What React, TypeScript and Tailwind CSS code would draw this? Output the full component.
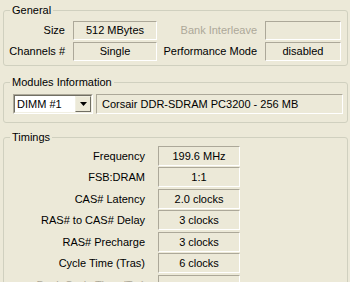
import React from "react";

const font = { fontFamily: '"Liberation Sans", Arial, sans-serif' };

function Box({ children, className = "" }: { children?: React.ReactNode; className?: string }) {
  return (
    <div
      className={
        "flex items-center justify-center border border-t-[#aca899] border-l-[#aca899] border-b-white border-r-white bg-[#ece9d8] text-black whitespace-nowrap " +
        className
      }
    >
      {children}
    </div>
  );
}

function Group({
  title,
  className = "",
  children,
}: {
  title: string;
  className?: string;
  children: React.ReactNode;
}) {
  return (
    <fieldset className={"border border-[#d0d0bf] rounded-[3px] " + className}>
      <legend className="ml-[6px] px-[2px] text-[11px] leading-[13px] text-black">{title}</legend>
      {children}
    </fieldset>
  );
}

const timings: { label: string; value: string; h: string }[] = [
  { label: "Frequency", value: "199.6 MHz", h: "h-[21px]" },
  { label: "FSB:DRAM", value: "1:1", h: "h-[22px]" },
  { label: "CAS# Latency", value: "2.0 clocks", h: "h-[21px]" },
  { label: "RAS# to CAS# Delay", value: "3 clocks", h: "h-[22px]" },
  { label: "RAS# Precharge", value: "3 clocks", h: "h-[21px]" },
  { label: "Cycle Time (Tras)", value: "6 clocks", h: "h-[22px]" },
];

export default function App() {
  return (
    <div
      className="w-[350px] h-[282px] overflow-hidden bg-[#ece9d8] text-[11px] leading-[13px] text-black pl-[3px] pr-[2px] pt-[4px]"
      style={font}
    >
      <Group title="General" className="pt-[4px] pb-[4px]">
        <div className="grid grid-cols-[61px_84px_92px_76px] gap-x-[8px] gap-y-[2px]">
          <div className="flex items-center justify-end h-[19px]">Size</div>
          <Box className="h-[19px]">512 MBytes</Box>
          <div className="flex items-center justify-end h-[19px] text-[#aca899]">Bank Interleave</div>
          <Box className="h-[19px]" />
          <div className="flex items-center justify-end h-[19px] whitespace-nowrap">Channels #</div>
          <Box className="h-[19px]">Single</Box>
          <div className="flex items-center justify-end h-[19px] whitespace-nowrap">Performance Mode</div>
          <Box className="h-[19px]">disabled</Box>
        </div>
      </Group>

      <Group title="Modules Information" className="mt-[10px] pt-[5px] pb-[8px]">
        <div className="flex items-center pl-[9px] gap-[3px]">
          <div className="w-[80px] h-[20px] border border-t-[#aca899] border-l-[#aca899] border-b-white border-r-white">
            <div className="h-full flex items-center bg-white border border-t-[#716f64] border-l-[#716f64] border-b-[#f1efe2] border-r-[#f1efe2]">
              <span className="flex-1 pl-[2px] whitespace-nowrap">DIMM #1</span>
              <div className="w-[16px] h-full flex items-center justify-center bg-[#ece9d8] border border-t-[#f1efe2] border-l-[#f1efe2] border-b-[#716f64] border-r-[#716f64]">
                <svg width="7" height="4" viewBox="0 0 7 4">
                  <path d="M0 0H7L3.5 4Z" fill="#000" />
                </svg>
              </div>
            </div>
          </div>
          <Box className="w-[247px] h-[20px] !justify-start pl-[5px]">Corsair DDR-SDRAM PC3200 - 256 MB</Box>
        </div>
      </Group>

      <Group title="Timings" className="mt-[8px] pt-[2px] h-[160px]">
        <div className="flex flex-col">
          {timings.map((t) => (
            <div key={t.label} className={"grid grid-cols-[141px_82px] gap-x-[13px] " + t.h}>
              <div className="flex items-center justify-end h-[20px] whitespace-nowrap">{t.label}</div>
              <Box className="h-[20px]">{t.value}</Box>
            </div>
          ))}
          <div className="grid grid-cols-[141px_82px] gap-x-[13px] h-[21px]">
            <div className="flex items-center justify-end h-[20px] whitespace-nowrap text-[#aca899]">Bank Cycle Time (Trc)</div>
            <Box className="h-[20px]" />
          </div>
        </div>
      </Group>
    </div>
  );
}
